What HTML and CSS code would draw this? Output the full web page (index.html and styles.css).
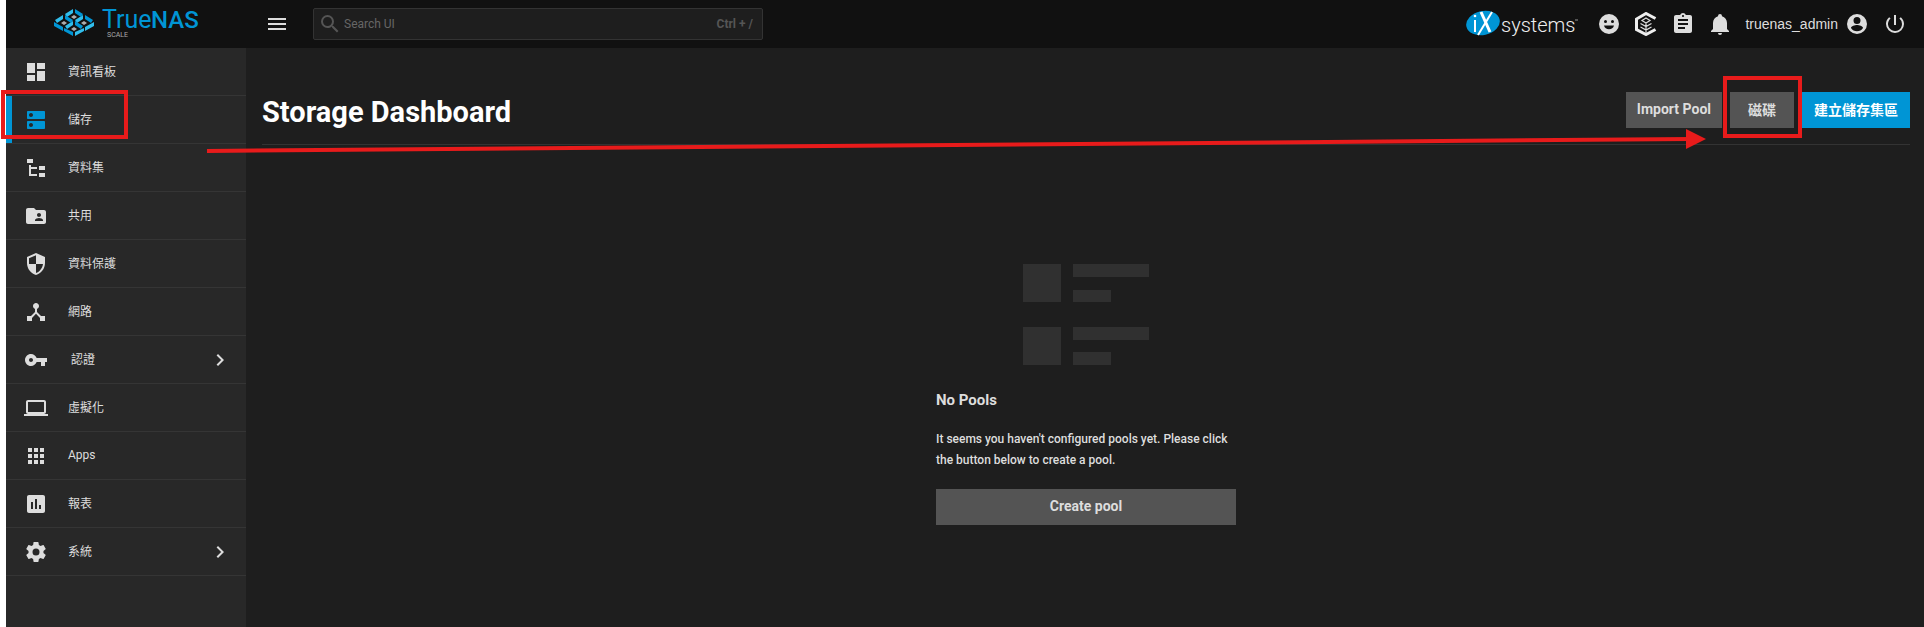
FILE: index.html
```html
<!DOCTYPE html>
<html lang="zh-Hant">

<head>
    <meta charset="UTF-8" />
    <meta name="viewport" content="width=device-width, initial-scale=1" />
    <title>TrueNAS - Storage Dashboard</title>
    <link rel="stylesheet" href="styles.css">
</head>

<body>
    <div class="app">
        <!-- Top Bar -->
        <header class="topbar">
            <a href="#" class="logo" aria-label="TrueNAS SCALE">
                <svg width="150" height="42" viewBox="0 -6 150 42">
                    <g fill="#31beec">
                        <path d="M11 5l8-5v4l-6 4zM1 11l8-5v4l-6 4zM21 11l8-5v4l-6 4zM11 17l8-5v4l-6 4z" />
                        <path d="M40 13l-9 5v4l9-5zM30 19l-9 4v4l9-5z" />
                    </g>
                    <g fill="#0095d5">
                        <path d="M29 5l-8-5v4l6 4zM19 11l-8-5v4l6 4zM39 11l-8-5v4l6 4zM29 17l-8-5v4l6 4z" />
                        <path d="M0 13l9 5v4l-9-5zM10 19l9 4v4l-9-5z" />
                    </g>
                    <path fill="#aeadae" d="M20 6l3 2-3 2-3-2zM10 12l3 2-3 2-3-2zM30 12l3 2-3 2-3-2zM20 18l3 2-3 2-3-2z" />
                    <text x="48" y="19" class="logo-true">True</text>
                    <text x="97" y="19" class="logo-nas">NAS</text>
                    <text x="53" y="28" class="logo-scale">SCALE</text>
                </svg>
            </a>

            <button class="icon-button menu-toggle" aria-label="Toggle menu">
                <svg class="icon" viewBox="0 0 24 24"><path d="M3 6h18v2H3zM3 11h18v2H3zM3 16h18v2H3z" /></svg>
            </button>

            <label class="search">
                <svg class="icon" viewBox="0 0 24 24"><path d="M15.5 14h-.79l-.28-.27A6.47 6.47 0 0 0 16 9.5 6.5 6.5 0 1 0 9.5 16c1.61 0 3.09-.59 4.23-1.57l.27.28v.79l5 4.99L20.49 19l-4.99-5zm-6 0C7.01 14 5 11.99 5 9.5S7.01 5 9.5 5 14 7.01 14 9.5 11.99 14 9.5 14z" /></svg>
                <input type="text" placeholder="Search UI" aria-label="Search UI">
                <span class="shortcut">Ctrl + /</span>
            </label>

            <div class="topbar-right">
                <a href="#" class="ix-logo" aria-label="iXsystems">
                    <svg width="114" height="32" viewBox="0 0 114 32">
                        <ellipse cx="18" cy="15" rx="17" ry="12" fill="#0095d5" transform="rotate(-12 18 15)" />
                        <path d="M10 12v12" stroke="#fff" stroke-width="2" />
                        <circle cx="10" cy="8" r="1.3" fill="#fff" />
                        <path d="M16 4l9 20" stroke="#fff" stroke-width="3" />
                        <path d="M27 4L13 27" stroke="#fff" stroke-width="2" />
                        <text x="36" y="24" class="ix-text">systems</text>
                        <path d="M110 12h3" stroke="#999" />
                    </svg>
                </a>
                <button class="icon-button" aria-label="Feedback">
                    <svg class="icon" viewBox="0 0 24 24"><path fill-rule="evenodd" d="M12 2a10 10 0 1 0 0 20 10 10 0 0 0 0-20zM8.500 8a1.500 1.500 0 1 1 0 3 1.500 1.500 0 0 1 0-3zM15.500 8a1.500 1.500 0 1 1 0 3 1.500 1.500 0 0 1 0-3zM7 13.500h10a5.200 5.200 0 0 1-10 0z" /></svg>
                </button>
                <button class="icon-button" aria-label="TrueCommand">
                    <svg class="icon" viewBox="0 0 24 24" fill="none">
                        <path d="M21.500 6.500L12 1.500 2.500 7v10.500L12 22.500l9.500-5" stroke="#eee" stroke-width="3" />
                        <path d="M12 6l4 2.500-4 2.500-4-2.500zM12 11v10M6.500 11.500l5.500 3 5.500-3M6.500 15l5.500 3 5.500-3" stroke="#ddd" stroke-width="1.200" />
                    </svg>
                </button>
                <button class="icon-button" aria-label="Jobs">
                    <svg class="icon" viewBox="0 0 24 24"><path d="M19 3h-4.180C14.400 1.840 13.300 1 12 1s-2.400.840-2.820 2H5c-1.100 0-2 .9-2 2v14c0 1.100.9 2 2 2h14c1.100 0 2-.9 2-2V5c0-1.100-.9-2-2-2zm-7 0c.55 0 1 .45 1 1s-.45 1-1 1-1-.45-1-1 .45-1 1-1zm2 14H7v-2h7v2zm3-4H7v-2h10v2zm0-4H7V7h10v2z" /></svg>
                </button>
                <button class="icon-button" aria-label="Alerts">
                    <svg class="icon" viewBox="0 0 24 24"><path d="M21 19v1H3v-1l2-2v-6c0-3.100 2.030-5.830 5-6.710V4a2 2 0 0 1 4 0v.290c2.970.880 5 3.610 5 6.710v6l2 2zm-7 2a2 2 0 0 1-4 0z" /></svg>
                </button>
                <button class="user-button">
                    truenas_admin
                    <svg class="icon" viewBox="0 0 24 24"><path fill-rule="evenodd" d="M12 2a10 10 0 1 0 0 20 10 10 0 0 0 0-20zm0 3a3.500 3.500 0 1 1 0 7 3.500 3.500 0 0 1 0-7zm0 14.200a7.200 7.200 0 0 1-6-3.220c.03-1.990 4-3.080 6-3.080s5.970 1.090 6 3.080a7.200 7.200 0 0 1-6 3.220z" /></svg>
                </button>
                <button class="icon-button" aria-label="Power">
                    <svg class="icon" viewBox="0 0 24 24"><path d="M13 3h-2v10h2V3zm4.830 2.170l-1.420 1.420A6.920 6.920 0 0 1 19 12a7 7 0 1 1-11.420-5.420L6.170 5.170A8.930 8.930 0 0 0 3 12a9 9 0 0 0 18 0c0-2.740-1.230-5.180-3.170-6.830z" /></svg>
                </button>
            </div>
        </header>

        <div class="layout">
            <!-- Sidebar -->
            <nav class="sidebar">
                <a href="#" class="nav-item">
                    <svg class="icon" viewBox="0 0 24 24"><path d="M13 3v6h8V3zM13 21h8V11h-8zM3 21h8v-6H3zM3 13h8V3H3z" /></svg>
                    <span>資訊看板</span>
                </a>
                <a href="#" class="nav-item active">
                    <svg class="icon" viewBox="0 0 24 24"><path d="M20 13H4c-.55 0-1 .45-1 1v6c0 .55.45 1 1 1h16c.55 0 1-.45 1-1v-6c0-.55-.45-1-1-1zM7 19c-1.100 0-2-.9-2-2s.9-2 2-2 2 .9 2 2-.9 2-2 2zM20 3H4c-.55 0-1 .45-1 1v6c0 .55.45 1 1 1h16c.55 0 1-.45 1-1V4c0-.55-.45-1-1-1zM7 9c-1.100 0-2-.9-2-2s.9-2 2-2 2 .9 2 2-.9 2-2 2z" /></svg>
                    <span>儲存</span>
                    <i class="mark mark-nav"></i>
                </a>
                <a href="#" class="nav-item">
                    <svg class="icon" viewBox="0 0 24 24"><path d="M3 3h6v4H3zM15 10h6v4h-6zM15 17h6v4h-6zM13 13H7v5h6v2H5V9h2v2h6z" /></svg>
                    <span>資料集</span>
                </a>
                <a href="#" class="nav-item">
                    <svg class="icon" viewBox="0 0 24 24"><path d="M20 6h-8l-2-2H4c-1.100 0-1.990.9-1.990 2L2 18c0 1.100.9 2 2 2h16c1.100 0 2-.9 2-2V8c0-1.100-.9-2-2-2zm-5 3c1.100 0 2 .9 2 2s-.9 2-2 2-2-.9-2-2 .9-2 2-2zm4 8h-8v-1c0-1.330 2.670-2 4-2s4 .67 4 2v1z" /></svg>
                    <span>共用</span>
                </a>
                <a href="#" class="nav-item">
                    <svg class="icon" viewBox="0 0 24 24"><path d="M12 1L3 5v6c0 5.550 3.840 10.740 9 12 5.160-1.260 9-6.450 9-12V5l-9-4zm0 10.990h7c-.53 4.120-3.280 7.790-7 8.940V12H5V6.300l7-3.110v8.800z" /></svg>
                    <span>資料保護</span>
                </a>
                <a href="#" class="nav-item">
                    <svg class="icon" viewBox="0 0 24 24"><path d="M17 16l-4-4V8.820C14.160 8.400 15 7.300 15 6c0-1.660-1.340-3-3-3S9 4.340 9 6c0 1.300.84 2.400 2 2.820V12l-4 4H3v5h5v-3.050l4-4.200 4 4.200V21h5v-5h-4z" /></svg>
                    <span>網路</span>
                </a>
                <a href="#" class="nav-item">
                    <svg class="icon" viewBox="0 0 24 24"><path d="M12.650 10C11.830 7.670 9.610 6 7 6c-3.310 0-6 2.690-6 6s2.690 6 6 6c2.610 0 4.830-1.670 5.650-4H17v4h4v-4h2v-4H12.650zM7 14c-1.100 0-2-.9-2-2s.9-2 2-2 2 .9 2 2-.9 2-2 2z" /></svg>
                    <span>&nbsp;認證</span>
                    <svg class="icon chevron" viewBox="0 0 24 24"><path d="M10 6L8.590 7.410 13.170 12l-4.580 4.590L10 18l6-6z" /></svg>
                </a>
                <a href="#" class="nav-item">
                    <svg class="icon" viewBox="0 0 24 24"><path d="M20 18c1.100 0 1.990-.9 1.990-2L22 6c0-1.100-.9-2-2-2H4c-1.100 0-2 .9-2 2v10c0 1.100.9 2 2 2H0v2h24v-2h-4zM4 6h16v10H4V6z" /></svg>
                    <span>虛擬化</span>
                </a>
                <a href="#" class="nav-item">
                    <svg class="icon" viewBox="0 0 24 24"><path d="M4 4h4v4H4zM10 4h4v4h-4zM16 4h4v4h-4zM4 10h4v4H4zM10 10h4v4h-4zM16 10h4v4h-4zM4 16h4v4H4zM10 16h4v4h-4zM16 16h4v4h-4z" /></svg>
                    <span>Apps</span>
                </a>
                <a href="#" class="nav-item">
                    <svg class="icon" viewBox="0 0 24 24"><path d="M19 3H5c-1.100 0-2 .9-2 2v14c0 1.100.9 2 2 2h14c1.100 0 2-.9 2-2V5c0-1.100-.9-2-2-2zM9 17H7v-7h2v7zm4 0h-2V7h2v10zm4 0h-2v-4h2v4z" /></svg>
                    <span>報表</span>
                </a>
                <a href="#" class="nav-item">
                    <svg class="icon" viewBox="0 0 24 24"><path d="M12 15.500A3.500 3.500 0 0 1 8.500 12 3.500 3.500 0 0 1 12 8.500a3.500 3.500 0 0 1 3.500 3.500 3.500 3.500 0 0 1-3.500 3.500m7.430-2.530c.04-.32.07-.64.07-.97s-.03-.66-.07-1l2.110-1.630c.19-.15.24-.42.12-.64l-2-3.460c-.12-.22-.39-.31-.61-.22l-2.490 1c-.52-.39-1.060-.73-1.690-.98l-.37-2.650A.506.506 0 0 0 14 2h-4c-.25 0-.46.18-.5.42l-.37 2.650c-.63.25-1.170.59-1.690.98l-2.490-1c-.22-.09-.49 0-.61.22l-2 3.460c-.13.22-.07.49.12.64L4.570 11c-.04.34-.07.67-.07 1s.03.65.07.97l-2.110 1.660c-.19.15-.25.42-.12.64l2 3.460c.12.22.39.3.61.22l2.490-1.010c.52.4 1.060.74 1.690.99l.37 2.650c.04.24.25.42.5.42h4c.25 0 .46-.18.5-.42l.37-2.650c.63-.26 1.170-.59 1.690-.99l2.490 1.010c.22.08.49 0 .61-.22l2-3.460c.12-.22.07-.49-.12-.64z" /></svg>
                    <span>系統</span>
                    <svg class="icon chevron" viewBox="0 0 24 24"><path d="M10 6L8.590 7.410 13.170 12l-4.580 4.590L10 18l6-6z" /></svg>
                </a>
            </nav>

            <!-- Main Content -->
            <main class="content">
                <div class="page-header">
                    <h1>Storage Dashboard</h1>
                    <div class="actions">
                        <button class="button">Import Pool</button>
                        <button class="button disks">磁碟<i class="mark mark-disks"></i></button>
                        <button class="button primary">建立儲存集區</button>
                    </div>
                </div>

                <section class="empty">
                    <svg class="placeholder" width="126" height="101" viewBox="0 0 126 101" fill="#303030">
                        <path d="M0 0h38v38H0zM50 0h76v13H50zM50 26h38v12H50z" />
                        <path d="M0 63h38v38H0zM50 63h76v13H50zM50 88h38v13H50z" />
                    </svg>
                    <h2>No Pools</h2>
                    <p>It seems you haven't configured pools yet. Please click the button below to create a pool.</p>
                    <button class="button">Create pool</button>
                </section>
            </main>
        </div>

        <!-- Arrow from the storage menu to the disks button -->
        <svg class="arrow">
            <line x1="0" y1="22" x2="99%" y2="10" stroke="#e81b1b" stroke-width="4" />
            <svg x="100%" y="0" overflow="visible"><path d="M-20 0L0 10l-20 10z" fill="#e81b1b" /></svg>
        </svg>
    </div>
</body>

</html>
```
FILE: styles.css
```css
/* Reset & Global Styles */
* {
    margin: 0;
    padding: 0;
    box-sizing: border-box;
}

body {
    background: #fff;
    padding-left: 6px;
    font-family: Roboto, "Noto Sans CJK TC", sans-serif;
    font-size: 12px;
    color: #ddd;
}

button {
    font-family: inherit;
    color: inherit;
    border: none;
    cursor: pointer;
}

a {
    color: inherit;
    text-decoration: none;
}

.app {
    position: relative;
    display: flex;
    flex-direction: column;
    min-height: 100vh;
    background: #1e1e1e;
}

.icon {
    display: block;
    flex: none;
    width: 24px;
    height: 24px;
    fill: currentColor;
}

.icon[fill="none"] {
    fill: none;
}

/* Top Bar */
.topbar {
    display: flex;
    align-items: center;
    height: 48px;
    padding-right: 17px;
    background: #111;
}

.logo {
    display: flex;
    width: 240px;
    padding-left: 48px;
}

.logo-true,
.logo-nas {
    font-size: 25px;
    font-weight: 400;
    fill: #0095d5;
}

.logo-nas {
    font-size: 24px;
    font-weight: 500;
}

.logo-scale {
    font-size: 7px;
    fill: #aaa;
}

.icon-button {
    display: flex;
    align-items: center;
    justify-content: center;
    background: none;
}

.menu-toggle {
    margin-left: 19px;
}

.search {
    display: flex;
    align-items: center;
    width: 450px;
    height: 32px;
    margin-left: 24px;
    padding: 0 9px 0 4px;
    background: #1e1e1e;
    border: 1px solid #333;
    border-radius: 2px;
    color: #555;
}

.search .icon {
    margin-right: 2px;
}

.search input {
    flex: 1;
    min-width: 0;
    background: none;
    border: none;
    outline: none;
    color: #ddd;
    font-family: inherit;
    font-size: 12px;
}

.search input::placeholder {
    color: #666;
}

.shortcut {
    font-weight: 700;
}

.topbar-right {
    display: flex;
    align-items: center;
    gap: 13px;
    margin-left: auto;
}

.ix-logo {
    display: flex;
    margin-right: 5px;
}

.ix-text {
    font-size: 20px;
    font-weight: 300;
    fill: #eee;
}

.user-button {
    display: flex;
    align-items: center;
    gap: 7px;
    margin-right: 1px;
    background: none;
    font-family: "Liberation Sans", sans-serif;
    font-size: 14px;
}

/* Sidebar */
.layout {
    flex: 1;
    display: flex;
}

.sidebar {
    flex: none;
    width: 240px;
    background: #282828;
}

.nav-item {
    position: relative;
    display: flex;
    align-items: center;
    gap: 20px;
    height: 48px;
    padding: 0 14px 0 18px;
    border-bottom: 1px solid #353535;
}

.nav-item span {
    padding-bottom: 2px;
}

.nav-item.active::before {
    content: "";
    position: absolute;
    left: 0;
    top: 0;
    width: 6px;
    height: 100%;
    background: #0095d5;
}

.nav-item.active > .icon {
    color: #0095d5;
}

.nav-item .chevron {
    margin-left: auto;
}

/* Main Content */
.content {
    flex: 1;
    padding: 32px 14px 32px 16px;
}

.page-header {
    display: flex;
    align-items: center;
    justify-content: space-between;
    height: 65px;
    padding-bottom: 4px;
    border-bottom: 1px solid #333;
}

h1 {
    padding-top: 4px;
    font-size: 29px;
    font-weight: 700;
    color: #fff;
}

.actions {
    display: flex;
    gap: 8px;
}

.button {
    position: relative;
    height: 36px;
    padding: 0 11px 2px;
    background: #545454;
    font-size: 14px;
    font-weight: 700;
}

.button.primary {
    padding: 0 12px 2px;
    background: #0095d5;
    color: #fff;
}

.button.disks {
    padding: 0 18px 2px;
}

/* Empty State */
.empty {
    display: flex;
    flex-direction: column;
    width: 300px;
    margin: 119px auto 0;
}

.placeholder {
    align-self: center;
}

.empty h2 {
    margin-top: 25px;
    font-size: 15px;
    line-height: 20px;
}

.empty p {
    margin: 19px 0 18px;
    font-weight: 500;
    line-height: 21px;
}

/* Red Marks */
.mark {
    position: absolute;
    border: 4px solid #e81b1b;
}

.mark-nav {
    left: -5px;
    top: -6px;
    width: 127px;
    height: 49px;
}

.mark-disks {
    inset: -16px -8px -10px -7px;
}

.arrow {
    position: absolute;
    left: 201px;
    top: 129px;
    width: calc(100% - 419px);
    height: 26px;
    pointer-events: none;
}
```
